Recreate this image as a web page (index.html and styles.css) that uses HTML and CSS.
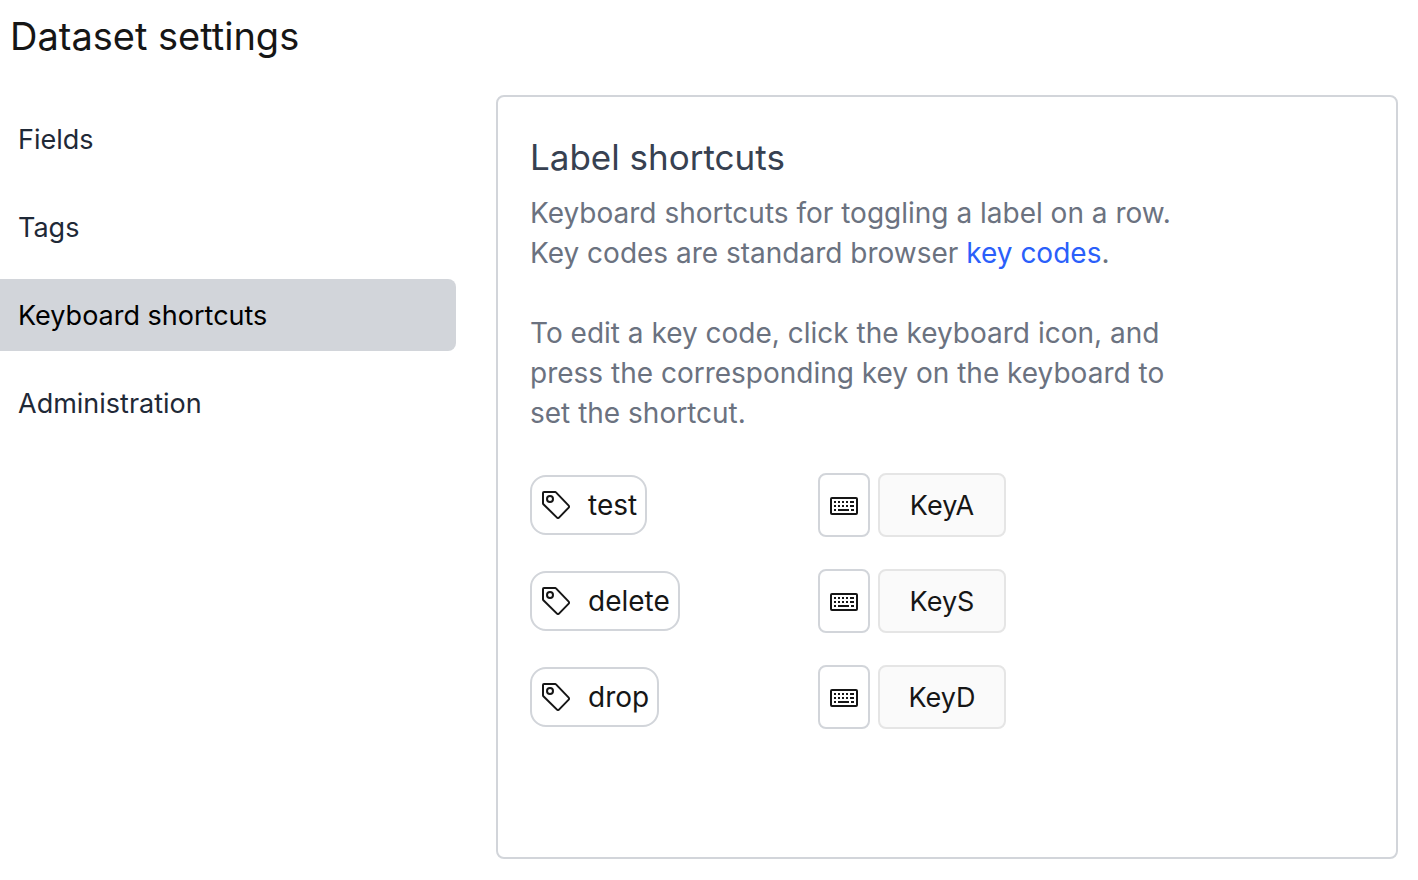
FILE: index.html
```html
<!DOCTYPE html>
<html lang="en">
<head>
<meta charset="utf-8">
<meta name="viewport" content="width=device-width, initial-scale=1">
<title>Dataset settings</title>
<link rel="stylesheet" href="styles.css">
</head>
<body>
<svg class="sprite" aria-hidden="true">
  <symbol id="icon-tag" viewBox="0 0 28 28">
    <path d="M2 1h11.2a1.2 1.2 0 0 1 .8.4L26.7 14.6a1.4 1.4 0 0 1 0 2L17 26.6a1.4 1.4 0 0 1-2 0L1.4 13.2a1.4 1.4 0 0 1-.4-1V2a1 1 0 0 1 1-1z" fill="none" stroke="currentColor" stroke-width="2"/>
    <circle cx="8" cy="8" r="3" fill="none" stroke="currentColor" stroke-width="2"/>
  </symbol>
  <symbol id="icon-keyboard" viewBox="0 -6 28 28">
    <rect x="1" y="1" width="26" height="16" rx="1" fill="none" stroke="currentColor" stroke-width="2"/>
    <path d="M4 4h2v2H4zM8 4h2v2H8zM12 4h2v2h-2zM16 4h2v2h-2zM20 4h4v2h-4zM4 8h2v2H4zM8 8h2v2H8zM12 8h2v2h-2zM16 8h2v2h-2zM20 8h4v2h-4zM4 12h2v2H4zM8 12h11v2H8zM21 12h3v2h-3z" fill="currentColor"/>
  </symbol>
</svg>
<h1 class="page-title">Dataset settings</h1>
<div class="layout">
  <nav class="menu" aria-label="Settings">
    <button type="button" class="menu-item">Fields</button>
    <button type="button" class="menu-item">Tags</button>
    <button type="button" class="menu-item active" aria-current="page">Keyboard shortcuts</button>
    <button type="button" class="menu-item">Administration</button>
  </nav>
  <main class="panel">
    <h2 class="panel-title">Label shortcuts</h2>
    <p class="description">Keyboard shortcuts for toggling a label on a row.<br>Key codes are standard browser <a class="link" href="#key-codes">key codes</a>.</p>
    <p class="description">To edit a key code, click the keyboard icon, and press the corresponding key on the keyboard to set the shortcut.</p>
    <div class="shortcuts">
      <div class="shortcut">
        <label class="tag" for="key-test"><svg class="icon" aria-hidden="true"><use href="#icon-tag"/></svg>test</label>
        <button type="button" class="key-button" aria-label="Edit test shortcut"><svg class="icon" aria-hidden="true"><use href="#icon-keyboard"/></svg></button>
        <input class="key-code" id="key-test" type="text" value="KeyA" readonly>
      </div>
      <div class="shortcut">
        <label class="tag" for="key-delete"><svg class="icon" aria-hidden="true"><use href="#icon-tag"/></svg>delete</label>
        <button type="button" class="key-button" aria-label="Edit delete shortcut"><svg class="icon" aria-hidden="true"><use href="#icon-keyboard"/></svg></button>
        <input class="key-code" id="key-delete" type="text" value="KeyS" readonly>
      </div>
      <div class="shortcut">
        <label class="tag" for="key-drop"><svg class="icon" aria-hidden="true"><use href="#icon-tag"/></svg>drop</label>
        <button type="button" class="key-button" aria-label="Edit drop shortcut"><svg class="icon" aria-hidden="true"><use href="#icon-keyboard"/></svg></button>
        <input class="key-code" id="key-drop" type="text" value="KeyD" readonly>
      </div>
    </div>
  </main>
</div>
</body>
</html>
```
FILE: styles.css
```css
* {
  box-sizing: border-box;
}

body {
  margin: 0;
  background: #fff;
  color: #161616;
  font: 28px/40px Inter, "Liberation Sans", sans-serif;
}

.sprite {
  display: none;
}

.page-title {
  margin: 0;
  padding: 12px 10px 35px;
  font-size: 38px;
  font-weight: 400;
  line-height: 48px;
}

.layout {
  display: grid;
  grid-template-columns: 456px minmax(0, 1fr);
  gap: 40px;
  padding: 0 20px 20px 0;
}

.menu {
  display: flex;
  flex-direction: column;
  gap: 16px;
  padding-top: 8px;
}

.menu-item {
  padding: 17px 18px 15px;
  border: 0;
  border-radius: 0 8px 8px 0;
  background: none;
  color: #1f2937;
  font: inherit;
  font-size: 27px;
  text-align: left;
  cursor: pointer;
}

.menu-item.active {
  background: #d2d5da;
  color: #000;
}

.panel {
  padding: 36px 32px 128px;
  border: 2px solid #d2d5da;
  border-radius: 8px;
}

.panel-title {
  margin: 0 0 12px;
  color: #374151;
  font-size: 35px;
  font-weight: 400;
  line-height: 48px;
}

.description {
  max-width: 656px;
  margin: 0 0 40px;
  color: #6b7280;
}

.link {
  color: #2b5ffa;
  text-decoration: none;
}

.shortcuts {
  display: grid;
  gap: 32px;
}

.shortcut {
  display: grid;
  grid-template-columns: 280px 52px 128px;
  gap: 8px;
  align-items: center;
}

.tag {
  display: flex;
  align-items: center;
  gap: 18px;
  justify-self: start;
  padding: 8px 8px 8px 10px;
  border: 2px solid #d2d5da;
  border-radius: 16px;
}

.icon {
  width: 28px;
  height: 28px;
}

.key-button {
  display: grid;
  place-items: center;
  height: 64px;
  padding: 0;
  border: 2px solid #d2d5da;
  border-radius: 8px;
  background: #fff;
  color: #161616;
  cursor: pointer;
}

.key-code {
  width: 100%;
  height: 64px;
  padding: 0;
  border: 2px solid #e5e5e5;
  border-radius: 8px;
  background: #fafafa;
  color: #161616;
  font: inherit;
  font-size: 27px;
  text-align: center;
}
```
